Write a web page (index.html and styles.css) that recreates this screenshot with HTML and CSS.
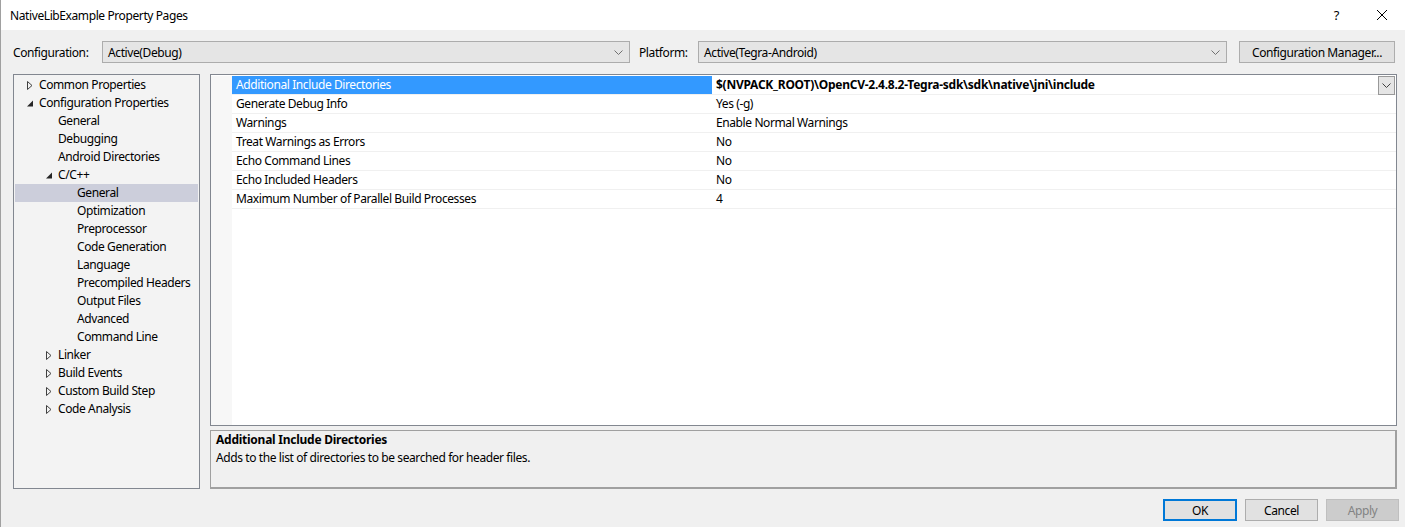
FILE: index.html
```html
<!DOCTYPE html>
<html>
<head>
<meta charset="utf-8">
<link rel="stylesheet" href="styles.css">
</head>
<body>
<div class="window">
  <div class="titlebar">
    <span class="title">NativeLibExample Property Pages</span>
    <div class="title-btns">
      <span class="help">?</span>
      <svg class="close" width="12" height="12" viewBox="0 0 12 12"><path d="M1 1L11 11M11 1L1 11" stroke="#000" stroke-width="1" fill="none"/></svg>
    </div>
  </div>
  <div class="content">
    <div class="config-row">
      <span class="label">Configuration:</span>
      <div class="combo combo-config"><span>Active(Debug)</span><svg width="9" height="5" viewBox="0 0 9 5"><path d="M0.5 0.5L4.5 4.5L8.5 0.5" stroke="#707070" fill="none"/></svg></div>
      <span class="label label-platform">Platform:</span>
      <div class="combo combo-platform"><span>Active(Tegra-Android)</span><svg width="9" height="5" viewBox="0 0 9 5"><path d="M0.5 0.5L4.5 4.5L8.5 0.5" stroke="#707070" fill="none"/></svg></div>
      <div class="btn btn-manager">Configuration Manager...</div>
    </div>
    <div class="panes">
      <div class="tree">
        <div class="node l0"><svg class="arr" width="6" height="9" viewBox="0 0 6 9"><path d="M0.5 0.5L5 4.5L0.5 8.5Z" stroke="#404040" fill="none"/></svg>Common Properties</div>
        <div class="node l0"><svg class="arr" width="6" height="9" viewBox="0 0 6 9"><path d="M6 1.5L6 7.5L0 7.5Z" fill="#262626"/></svg>Configuration Properties</div>
        <div class="node l1 leaf">General</div>
        <div class="node l1 leaf">Debugging</div>
        <div class="node l1 leaf">Android Directories</div>
        <div class="node l1"><svg class="arr" width="6" height="9" viewBox="0 0 6 9"><path d="M6 1.5L6 7.5L0 7.5Z" fill="#262626"/></svg>C/C++</div>
        <div class="node l2 leaf selected">General</div>
        <div class="node l2 leaf">Optimization</div>
        <div class="node l2 leaf">Preprocessor</div>
        <div class="node l2 leaf">Code Generation</div>
        <div class="node l2 leaf">Language</div>
        <div class="node l2 leaf">Precompiled Headers</div>
        <div class="node l2 leaf">Output Files</div>
        <div class="node l2 leaf">Advanced</div>
        <div class="node l2 leaf">Command Line</div>
        <div class="node l1"><svg class="arr" width="6" height="9" viewBox="0 0 6 9"><path d="M0.5 0.5L5 4.5L0.5 8.5Z" stroke="#404040" fill="none"/></svg>Linker</div>
        <div class="node l1"><svg class="arr" width="6" height="9" viewBox="0 0 6 9"><path d="M0.5 0.5L5 4.5L0.5 8.5Z" stroke="#404040" fill="none"/></svg>Build Events</div>
        <div class="node l1"><svg class="arr" width="6" height="9" viewBox="0 0 6 9"><path d="M0.5 0.5L5 4.5L0.5 8.5Z" stroke="#404040" fill="none"/></svg>Custom Build Step</div>
        <div class="node l1"><svg class="arr" width="6" height="9" viewBox="0 0 6 9"><path d="M0.5 0.5L5 4.5L0.5 8.5Z" stroke="#404040" fill="none"/></svg>Code Analysis</div>
      </div>
      <div class="right">
        <div class="grid">
          <div class="gutter"></div>
          <div class="rows">
            <div class="row selected"><div class="name">Additional Include Directories</div><div class="value bold"><span>$(NVPACK_ROOT)\OpenCV-2.4.8.2-Tegra-sdk\sdk\native\jni\include</span><div class="dd"><svg width="9" height="5" viewBox="0 0 9 5"><path d="M0.5 0.5L4.5 4.5L8.5 0.5" stroke="#404040" fill="none"/></svg></div></div></div>
            <div class="row"><div class="name">Generate Debug Info</div><div class="value">Yes (-g)</div></div>
            <div class="row"><div class="name">Warnings</div><div class="value">Enable Normal Warnings</div></div>
            <div class="row"><div class="name">Treat Warnings as Errors</div><div class="value">No</div></div>
            <div class="row"><div class="name">Echo Command Lines</div><div class="value">No</div></div>
            <div class="row"><div class="name">Echo Included Headers</div><div class="value">No</div></div>
            <div class="row"><div class="name">Maximum Number of Parallel Build Processes</div><div class="value">4</div></div>
          </div>
        </div>
        <div class="desc">
          <div class="desc-title">Additional Include Directories</div>
          <div class="desc-text">Adds to the list of directories to be searched for header files.</div>
        </div>
      </div>
    </div>
    <div class="buttons">
      <div class="btn btn-ok">OK</div>
      <div class="btn btn-cancel">Cancel</div>
      <div class="btn btn-apply">Apply</div>
    </div>
  </div>
</div>
</body>
</html>
```
FILE: styles.css
```css
* { box-sizing: border-box; }
html, body { margin: 0; padding: 0; }
body {
  width: 1405px;
  height: 527px;
  overflow: hidden;
  background: #f0f0f0;
  font-family: "Noto Sans", "Open Sans", sans-serif;
  font-size: 12px;
  letter-spacing: -0.4px;
  color: #000;
}
.window {
  width: 1405px;
  height: 527px;
  border-left: 1px solid #a0a0a0;
  display: flex;
  flex-direction: column;
}
.titlebar {
  height: 30px;
  background: #fff;
  display: flex;
  align-items: center;
  padding-left: 9px;
  justify-content: space-between;
}
.title { font-size: 12px; }
.title-btns {
  display: flex;
  align-items: center;
  padding-right: 17px;
}
.help { font-size: 13px; margin-right: 37px; }
.close { display: block; }
.content {
  padding: 0 6px 0 12px;
  display: flex;
  flex-direction: column;
}
.config-row {
  display: flex;
  align-items: center;
  height: 22px;
  margin-top: 11px;
}
.label { width: 89px; }
.label-platform { width: 59px; margin-left: 9px; }
.combo {
  height: 22px;
  background: #e5e5e5;
  border: 1px solid #acacac;
  display: flex;
  align-items: center;
  justify-content: space-between;
  padding: 0 6px 0 5px;
}
.combo-config { width: 528px; }
.combo-platform { width: 529px; }
.btn {
  height: 22px;
  display: flex;
  align-items: center;
  justify-content: center;
  background: #e1e1e1;
  border: 1px solid #adadad;
}
.btn-manager { width: 156px; margin-left: 12px; }
.panes {
  display: flex;
  margin-top: 11px;
  height: 415px;
}
.tree {
  width: 187px;
  background: #f3f3f3;
  border: 1px solid #828790;
  padding: 1px 1px;
}
.node {
  height: 18px;
  display: flex;
  align-items: center;
  white-space: nowrap;
  padding-bottom: 2px;
}
.arr { flex: none; margin-right: 6px; margin-top: 2px; }
.l0 { padding-left: 12px; }
.l1 { padding-left: 31px; }
.l1.leaf { padding-left: 43px; }
.l2.leaf { padding-left: 62px; }
.node.selected { background: #cccedb; }
.right {
  margin-left: 10px;
  width: 1187px;
  display: flex;
  flex-direction: column;
}
.grid {
  height: 352px;
  background: #fff;
  border: 1px solid #828790;
  display: flex;
  padding-top: 1px;
}
.gutter { width: 21px; background: #f7f7f7; }
.rows { flex: 1; }
.row {
  display: flex;
  height: 19px;
  border-bottom: 1px solid #f0f0f0;
}
.row .name {
  width: 480px;
  padding-left: 4px;
  padding-bottom: 2px;
  display: flex;
  align-items: center;
  white-space: nowrap;
}
.row .value {
  flex: 1;
  padding-left: 4px;
  padding-bottom: 2px;
  display: flex;
  align-items: center;
  white-space: nowrap;
}
.row.selected .name { background: #3399ff; color: #fff; }
.value.bold { font-weight: bold; justify-content: space-between; padding-right: 0; padding-bottom: 0; }
.value.bold span { padding-bottom: 2px; letter-spacing: -0.25px; }
.dd {
  width: 17px;
  height: 19px;
  background: #e5e5e5;
  border: 1px solid #999;
  display: flex;
  align-items: center;
  justify-content: center;
  margin-right: 1px;
}
.desc {
  margin-top: 4px;
  height: 59px;
  border: 1px solid #a0a0a0;
  border-bottom: 2px solid #a0a0a0;
  border-right: 2px solid #a0a0a0;
  padding: 0 5px;
}
.desc-title { font-weight: bold; height: 18px; line-height: 18px; letter-spacing: -0.25px; }
.desc-text { height: 18px; line-height: 18px; }
.buttons {
  display: flex;
  justify-content: flex-end;
  margin-top: 10px;
  gap: 8px;
}
.btn-ok { width: 74px; border: 2px solid #0078d7; }
.btn-cancel { width: 73px; }
.btn-apply { width: 73px; background: #cccccc; border-color: #bfbfbf; color: #838383; }
```
